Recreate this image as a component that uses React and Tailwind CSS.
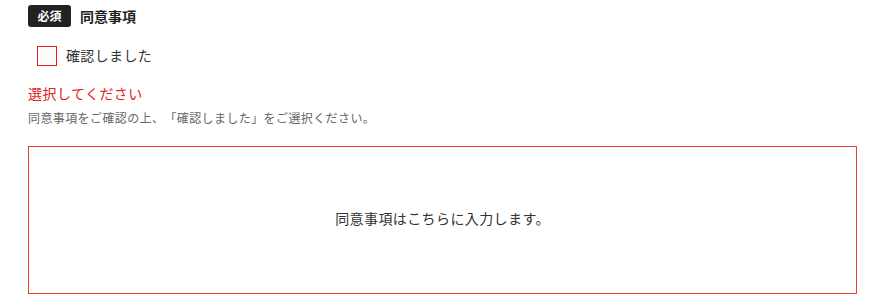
export default function App() {
  return (
    <div className="w-[880px] h-[298px] bg-white pl-[28px] pr-[23px] pt-[5px] [text-spacing-trim:space-all]" style={{ fontFamily: '"Noto Sans CJK JP", "Noto Sans", sans-serif' }}>
      <div className="flex items-center h-[22px]">
        <span className="flex items-center justify-center w-[43px] h-[22px] rounded-[3px] bg-[#222222] text-white text-[12px] font-bold leading-none">必須</span>
        <span className="ml-[9px] text-[14px] font-bold text-[#222222] leading-none">同意事項</span>
      </div>
      <label className="flex items-center mt-[19px] ml-[9px] h-[20px]">
        <span className="w-[20px] h-[20px] border border-[#e02020] bg-[#fbfbfa]"></span>
        <span className="ml-[9px] text-[14px] tracking-[0.35px] text-[#333333] leading-none pb-[2px]">確認しました</span>
      </label>
      <div className="mt-[18px] text-[14px] tracking-[0.45px] text-[#e02020] leading-[18px]">選択してください</div>
      <div className="mt-[8px] text-[12px] tracking-[0.4px] text-[#666666] leading-[16px]">同意事項をご確認の上、「確認しました」をご選択ください。</div>
      <div className="mt-[20px] h-[148px] border border-[#e8412f] flex items-center justify-center pb-[4px]">
        <span className="text-[14px] tracking-[0.4px] text-[#333333]">同意事項はこちらに入力します。</span>
      </div>
    </div>
  );
}
